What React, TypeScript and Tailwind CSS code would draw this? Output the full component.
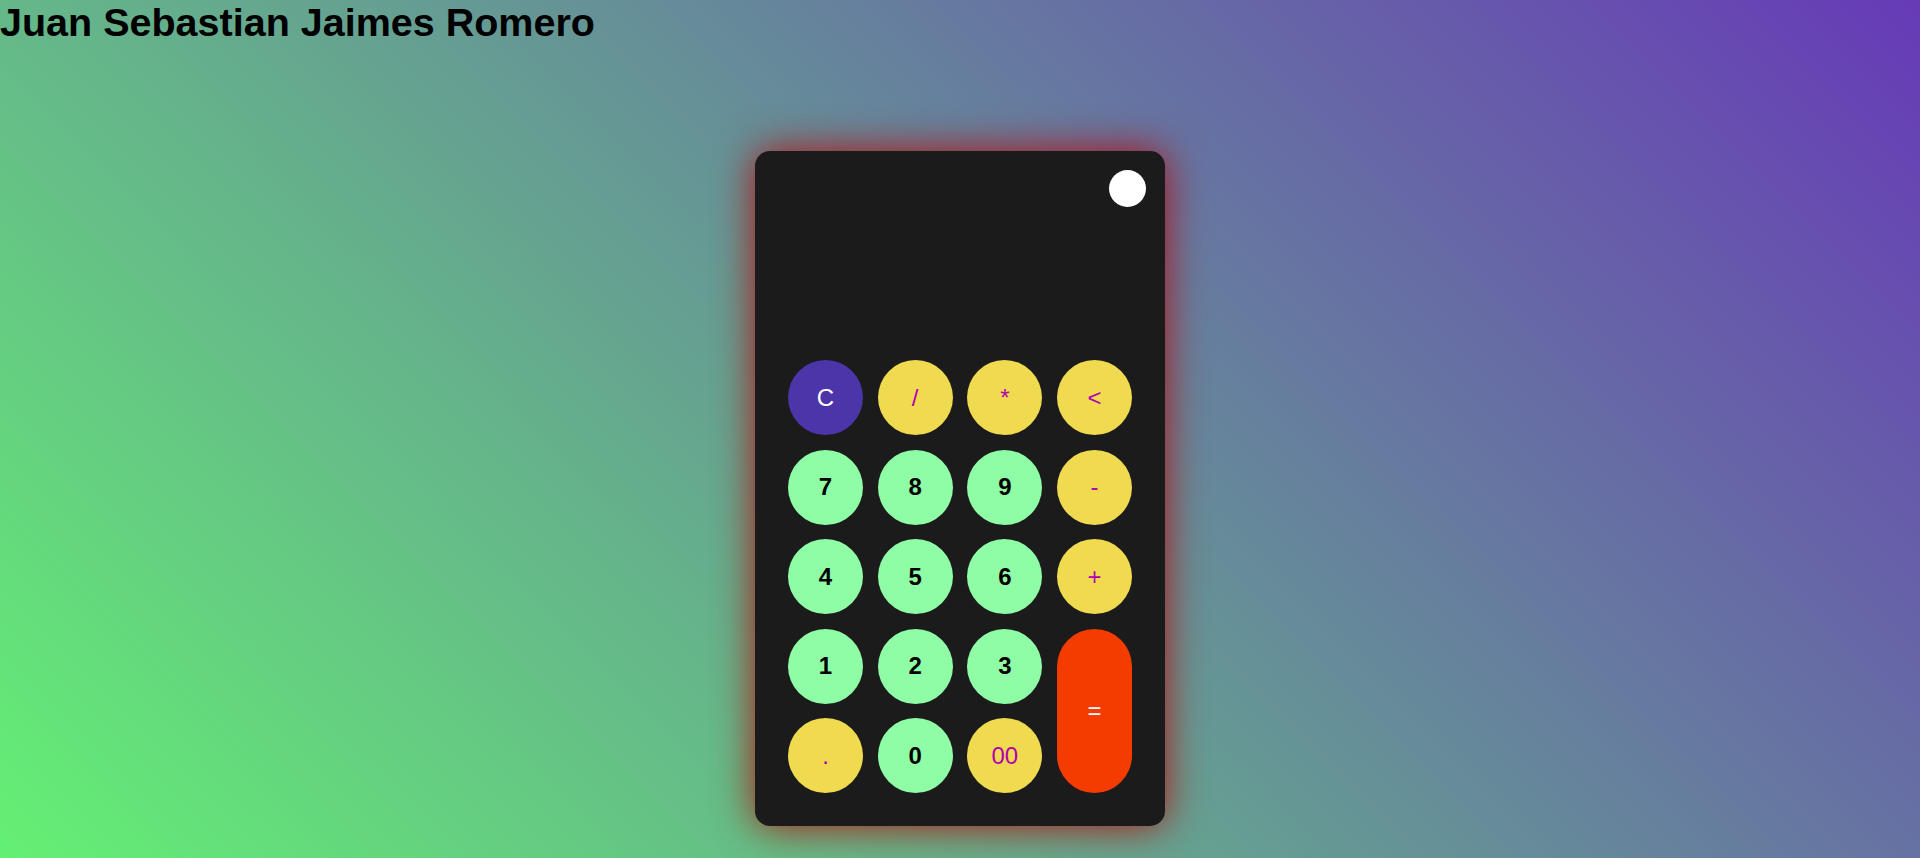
import React from "react";

type Btn = { label: string; kind: "clear" | "op" | "num" | "eq" };

const rows: Btn[] = [
  { label: "C", kind: "clear" },
  { label: "/", kind: "op" },
  { label: "*", kind: "op" },
  { label: "<", kind: "op" },
  { label: "7", kind: "num" },
  { label: "8", kind: "num" },
  { label: "9", kind: "num" },
  { label: "-", kind: "op" },
  { label: "4", kind: "num" },
  { label: "5", kind: "num" },
  { label: "6", kind: "num" },
  { label: "+", kind: "op" },
  { label: "1", kind: "num" },
  { label: "2", kind: "num" },
  { label: "3", kind: "num" },
  { label: "=", kind: "eq" },
  { label: ".", kind: "op" },
  { label: "0", kind: "num" },
  { label: "00", kind: "op" },
];

function cls(kind: Btn["kind"]) {
  switch (kind) {
    case "clear":
      return "h-[75px] bg-[#4b35a9] text-white font-normal";
    case "op":
      return "h-[75px] bg-[#f0da4f] text-[#b000b0] font-normal";
    case "num":
      return "h-[75px] bg-[#8ffca6] text-black font-bold";
    case "eq":
      return "bg-[#f43c00] text-white font-normal row-span-2 h-full";
  }
}

export default function App() {
  return (
    <div className="min-h-[938px] bg-fixed bg-[linear-gradient(45deg,#64f074,#673ab7)] font-['Liberation_Sans',Arial,sans-serif]">
      <h1 className="m-0 text-[39.5px] font-bold leading-[normal] text-black">
        Juan Sebastian Jaimes Romero
      </h1>
      <div className="flex justify-center pt-[106px]">
        <div className="w-[410px] h-[675px] rounded-[15px] bg-[#1b1b1b] shadow-[0_0_40px_rgba(180,0,0,0.9)] flex flex-col">
          <div className="h-[209px] flex justify-end pt-[19px] pr-[19px]">
            <div className="w-[37px] h-[37px] rounded-full bg-white" />
          </div>
          <div className="grid grid-cols-[repeat(4,75px)] auto-rows-[75px] gap-x-[14.67px] gap-y-[14.5px] px-[33px]">
            {rows.map((b) => (
              <button
                key={b.label}
                className={`w-[75px] rounded-full flex items-center justify-center text-[24px] ${cls(b.kind)}`}
              >
                {b.label}
              </button>
            ))}
          </div>
        </div>
      </div>
    </div>
  );
}
